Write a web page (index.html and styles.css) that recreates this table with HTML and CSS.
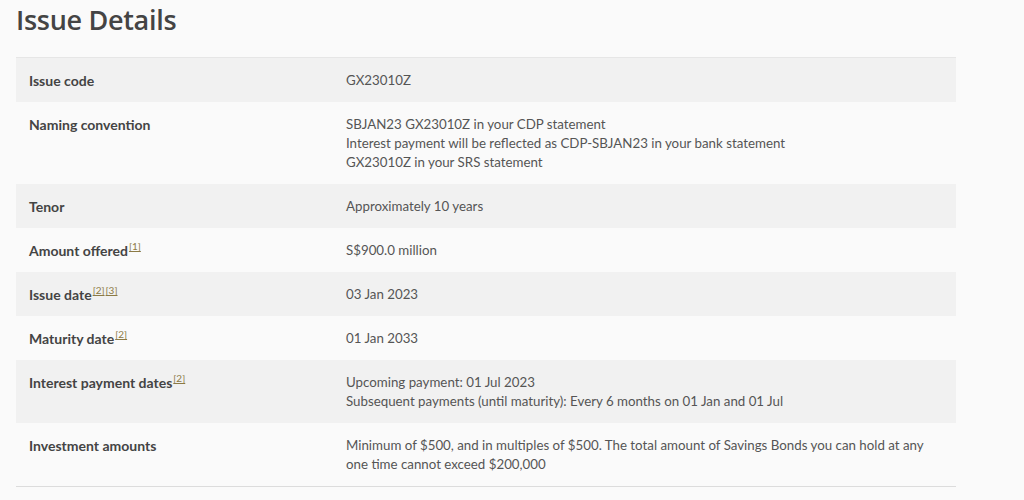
FILE: index.html
```html
<!DOCTYPE html>
<html>
<head>
<meta charset="utf-8">
<link rel="stylesheet" href="styles.css">
</head>
<body>
<h2 class="title">Issue Details</h2>
<div class="table">
  <div class="row alt"><div class="label">Issue code</div><div class="value">GX23010Z</div></div>
  <div class="row"><div class="label">Naming convention</div><div class="value">SBJAN23 GX23010Z in your CDP statement<br>Interest payment will be reflected as CDP-SBJAN23 in your bank statement<br>GX23010Z in your SRS statement</div></div>
  <div class="row alt"><div class="label">Tenor</div><div class="value">Approximately 10 years</div></div>
  <div class="row"><div class="label">Amount offered<sup class="ref">[1]</sup></div><div class="value">S$900.0 million</div></div>
  <div class="row alt"><div class="label">Issue date<sup class="ref">[2]</sup><sup class="ref">[3]</sup></div><div class="value">03 Jan 2023</div></div>
  <div class="row"><div class="label">Maturity date<sup class="ref">[2]</sup></div><div class="value">01 Jan 2033</div></div>
  <div class="row alt"><div class="label">Interest payment dates<sup class="ref">[2]</sup></div><div class="value">Upcoming payment: 01 Jul 2023<br>Subsequent payments (until maturity): Every 6 months on 01 Jan and 01 Jul</div></div>
  <div class="row"><div class="label">Investment amounts</div><div class="value">Minimum of $500, and in multiples of $500. The total amount of Savings Bonds you can hold at any one time cannot exceed $200,000</div></div>
</div>
</body>
</html>
```
FILE: styles.css
```css
html, body {
  margin: 0;
  padding: 0;
  background: #fafafa;
}
body {
  font-family: "Lato", "Liberation Sans", sans-serif;
  color: #555;
  padding: 0 68px 0 16px;
}
.title {
  margin: 0;
  padding-top: 4px;
  height: 53px;
  font-family: "Open Sans", sans-serif;
  font-weight: 600;
  font-size: 27px;
  line-height: 32px;
  color: #444;
  letter-spacing: -0.3px;
}
.table {
  border-top: 1px solid #e6e6e6;
  border-bottom: 1px solid #dcdcdc;
}
.row {
  display: grid;
  grid-template-columns: 317px 1fr;
  padding: 13px 13px 12px;
  font-size: 13.3px;
  line-height: 19px;
}
.row.alt {
  background: #f1f1f1;
}
.label {
  font-weight: 700;
  font-size: 14px;
  color: #444;
}
.value {
  color: #555;
  padding-right: 10px;
}
.ref {
  font-size: 10px;
  font-weight: 400;
  color: #8c7a45;
  vertical-align: 6px;
  line-height: 0;
  margin-left: 1px;
  text-decoration: underline;
}
```
